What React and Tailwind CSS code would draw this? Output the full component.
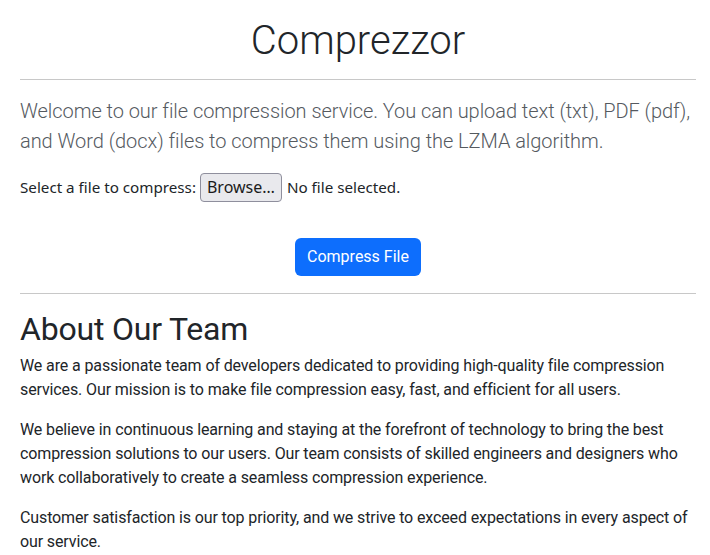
import React from "react";

export default function App() {
  return (
    <div className="min-h-screen bg-white pl-5 pr-[14px] text-[#212529] font-['Roboto',_'Liberation_Sans',_sans-serif]">
      <h1 className="mt-[17px] text-center text-[40px] leading-[48px] font-light">Comprezzor</h1>
      <hr className="mt-[14px] border-t border-[#c8c8c8]" />

      <p className="mt-4 text-[20px] leading-[30px] font-light text-[#555a5f] tracking-[-0.05px]">
        Welcome to our file compression service. You can upload text (txt), PDF (pdf), and Word (docx) files to compress
        them using the LZMA algorithm.
      </p>

      <form className="mt-4" onSubmit={(e) => e.preventDefault()}>
        <div className="flex h-[30px] items-center font-['Noto_Sans',_sans-serif] text-[15.2px]">
          <label htmlFor="file">Select a file to compress:</label>
          <span className="ml-1 flex h-[29px] items-center rounded-[4px] border border-[#8f8f9d] bg-[#e9e9ed] px-[6px] text-[16px] text-[#1b1b1b]">
            Browse…
          </span>
          <span className="ml-[5px]">No file selected.</span>
        </div>
        <div className="mt-9 flex justify-center">
          <button
            type="submit"
            className="h-[38px] rounded-[6px] bg-[#0d6efd] px-3 text-[16px] leading-6 text-white"
          >
            Compress File
          </button>
        </div>
      </form>

      <hr className="mt-[17px] border-t border-[#c8c8c8]" />

      <h2 className="mt-4 text-[32px] leading-[38px] tracking-[-0.2px]">About Our Team</h2>
      <div className="mt-[6px] text-[16px] leading-6 tracking-[-0.12px]">
        <p>
          We are a passionate team of developers dedicated to providing high-quality file compression services. Our
          mission is to make file compression easy, fast, and efficient for all users.
        </p>
        <p className="mt-4">
          We believe in continuous learning and staying at the forefront of technology to bring the best compression
          solutions to our users. Our team consists of skilled engineers and designers who work collaboratively to
          create a seamless compression experience.
        </p>
        <p className="mt-4">
          Customer satisfaction is our top priority, and we strive to exceed expectations in every aspect of our
          service.
        </p>
      </div>
    </div>
  );
}
